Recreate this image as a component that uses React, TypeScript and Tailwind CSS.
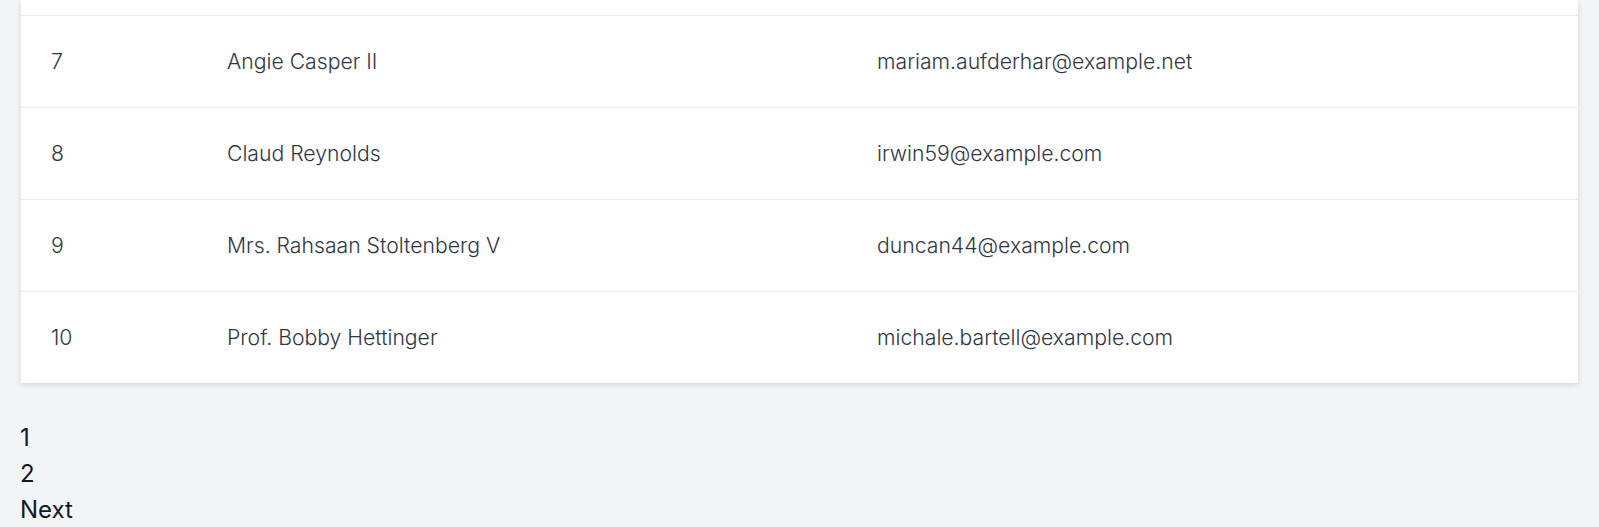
const rows = [
  { id: 7, name: "Angie Casper II", email: "mariam.aufderhar@example.net" },
  { id: 8, name: "Claud Reynolds", email: "irwin59@example.com" },
  { id: 9, name: "Mrs. Rahsaan Stoltenberg V", email: "duncan44@example.com" },
  { id: 10, name: "Prof. Bobby Hettinger", email: "michale.bartell@example.com" },
]

export default function App() {
  return (
    <div className="min-h-[527px] bg-[#f3f4f6] font-['Inter','Liberation_Sans',sans-serif]">
      <div className="mx-[21px] bg-white shadow-[0_2px_6px_rgba(0,0,0,0.12)]">
        <div className="h-[15px]" />
        {rows.map((r) => (
          <div
            key={r.id}
            className="grid h-[92px] grid-cols-[176px_650px_1fr] items-center border-t border-[#ececef] px-[30px] text-[21.2px] font-light text-[#2f3746]"
          >
            <span>{r.id}</span>
            <span>{r.name}</span>
            <span>{r.email}</span>
          </div>
        ))}
      </div>
      <div className="mt-[37px] px-[20px] text-[24px] leading-[36px] text-[#111827]">
        <div>1</div>
        <div>2</div>
        <div>Next</div>
      </div>
    </div>
  )
}
